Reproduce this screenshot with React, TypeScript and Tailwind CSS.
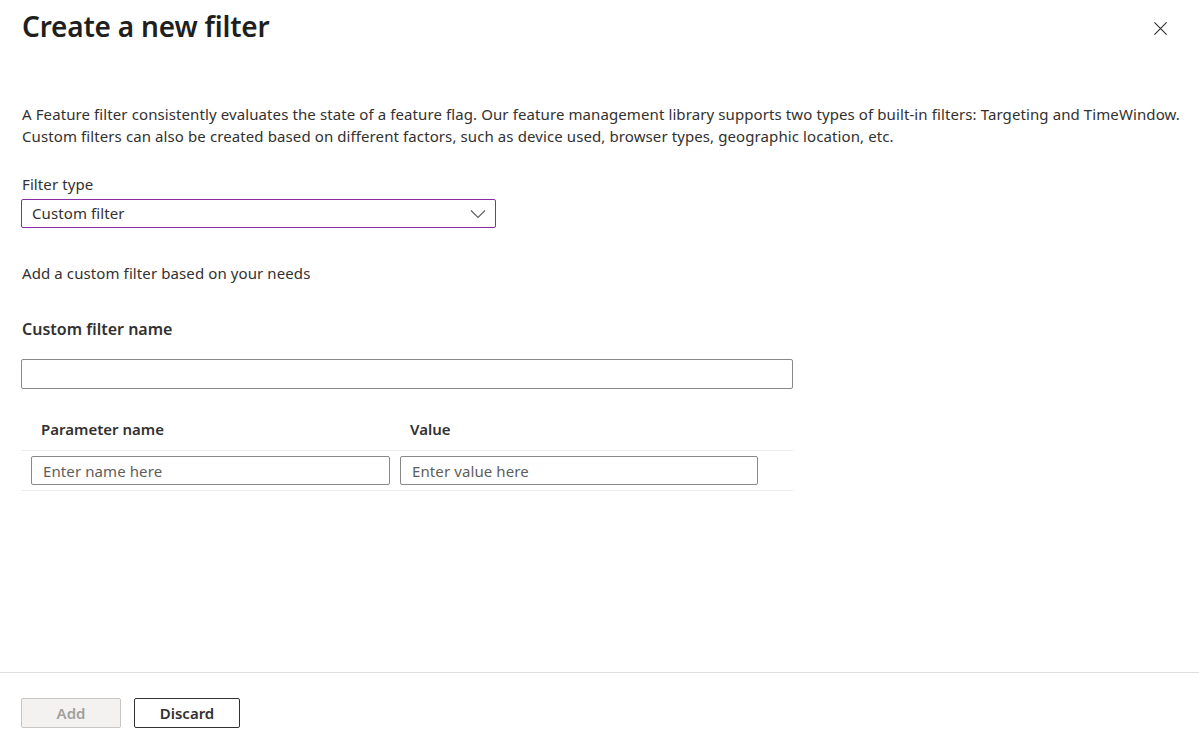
import React from "react";

export default function App() {
  return (
    <div
      className="w-[1199px] h-[742px] bg-white text-[#323130] flex flex-col overflow-hidden"
      style={{ fontFamily: '"Segoe UI", "Noto Sans", "Open Sans", sans-serif' }}
    >
      <div className="flex-1 flex flex-col px-[21px]">
        <div className="flex items-start justify-between h-[54px]">
          <h1 className="text-[28px] leading-[36px] font-semibold text-[#201f1e] pt-[8px] pl-[1px] tracking-[-0.2px]">
            Create a new filter
          </h1>
          <button className="mt-[20px] mr-[10px] w-[16px] h-[16px] flex items-center justify-center text-[#323130]">
            <svg width="15" height="15" viewBox="0 0 16 16" fill="none" stroke="currentColor" strokeWidth="1.2">
              <path d="M1.5 1.5 L14.5 14.5 M14.5 1.5 L1.5 14.5" />
            </svg>
          </button>
        </div>
        <p className="mt-[49px] pl-[1px] text-[15px] leading-[22px] tracking-[0.1px] whitespace-nowrap">
          A Feature filter consistently evaluates the state of a feature flag. Our feature management library supports two types of built-in filters: Targeting and TimeWindow.
          <br />
          Custom filters can also be created based on different factors, such as device used, browser types, geographic location, etc.
        </p>
        <label className="mt-[27px] pl-[1px] text-[15px] leading-[20px] tracking-[0.1px]">Filter type</label>
        <div className="mt-[5px] w-[475px] h-[29px] border border-[#8a2da5] rounded-[2px] flex items-center justify-between pl-[10px] pr-[9px]">
          <span className="text-[15px] tracking-[0.1px]">Custom filter</span>
          <svg width="16" height="10" viewBox="0 0 16 10" fill="none" stroke="#605e5c" strokeWidth="1.1">
            <path d="M1 1.5 L8 8.5 L15 1.5" />
          </svg>
        </div>
        <p className="mt-[35px] pl-[1px] text-[15px] leading-[20px] tracking-[0.1px]">Add a custom filter based on your needs</p>
        <h2 className="mt-[35px] pl-[1px] text-[16px] leading-[22px] font-semibold">Custom filter name</h2>
        <input className="mt-[19px] w-[772px] h-[30px] border border-[#8a8886] rounded-[2px] outline-none" />
        <div className="mt-[19px] w-[772px]">
          <div className="flex h-[43px] items-center border-b border-[#edebe9] text-[15px] font-semibold">
            <div className="w-[369px] pl-[20px]">Parameter name</div>
            <div className="pl-[20px]">Value</div>
          </div>
          <div className="flex items-center h-[40px] border-b border-[#edebe9] gap-[10px] pl-[10px]">
            <input
              placeholder="Enter name here"
              className="w-[359px] h-[29px] border border-[#8a8886] rounded-[2px] px-[11px] text-[15px] tracking-[0.1px] placeholder:text-[#605e5c] outline-none"
            />
            <input
              placeholder="Enter value here"
              className="w-[358px] h-[29px] border border-[#8a8886] rounded-[2px] px-[11px] text-[15px] tracking-[0.1px] placeholder:text-[#605e5c] outline-none"
            />
          </div>
        </div>
      </div>
      <div className="h-[70px] border-t border-[#e1dfdd] flex items-start gap-[13px] px-[21px] pt-[25px]">
        <button className="w-[100px] h-[30px] bg-[#f3f2f1] border border-[#c8c6c4] rounded-[2px] text-[15px] font-semibold text-[#a19f9d]">
          Add
        </button>
        <button className="w-[106px] h-[30px] bg-white border border-[#323130] rounded-[2px] text-[15px] font-semibold text-[#323130]">
          Discard
        </button>
      </div>
    </div>
  );
}
